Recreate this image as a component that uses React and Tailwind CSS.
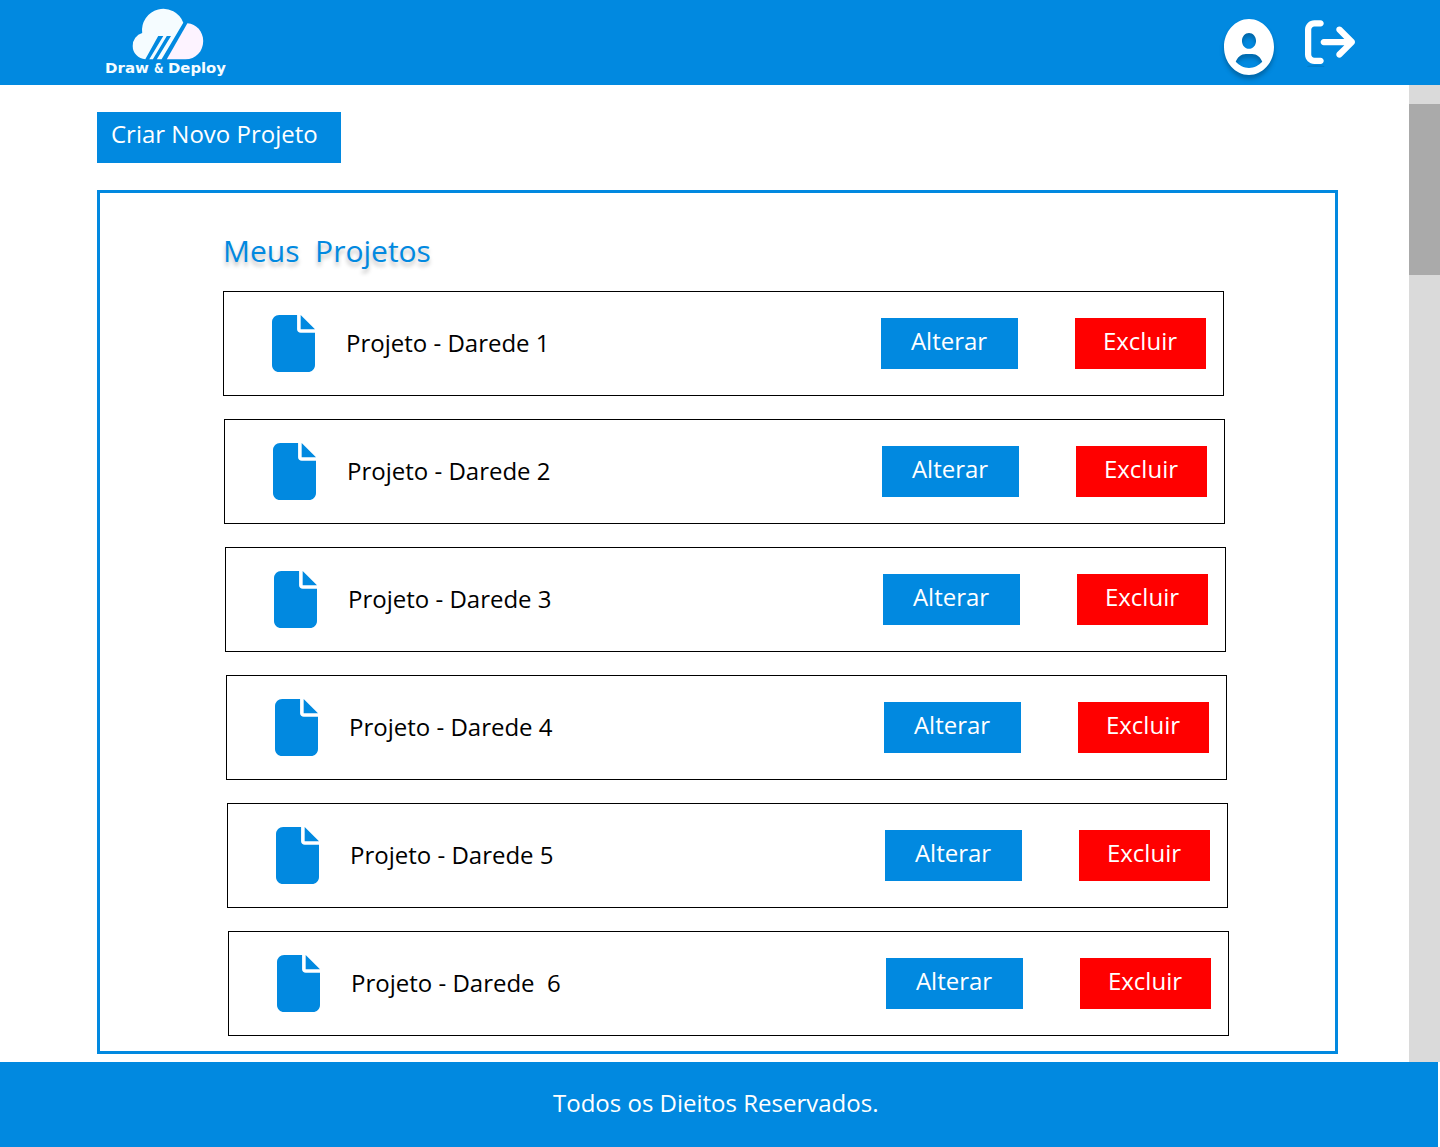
const projects = [
  { name: "Projeto - Darede 1", offset: "ml-0" },
  { name: "Projeto - Darede 2", offset: "ml-[1px]" },
  { name: "Projeto - Darede 3", offset: "ml-[2px]" },
  { name: "Projeto - Darede 4", offset: "ml-[3px]" },
  { name: "Projeto - Darede 5", offset: "ml-[4px]" },
  { name: "Projeto - Darede  6", offset: "ml-[5px]" },
];

function Logo() {
  return (
    <svg width="130" height="80" viewBox="0 0 130 80" className="block" aria-label="Draw & Deploy">
      <path
        fill="#f5fcff"
        d="M45.3 59.3A13.4 13.4 0 0 1 32.7 45.9A13.4 13.4 0 0 1 42.2 33A21.3 21.3 0 0 1 83.3 22.8L61.6 59.3H56.8L71 36H66.8L52.9 59.3H49.3L63.3 36H58.2L45.3 59.3Z"
      />
      <path fill="#fdf3ff" d="M66.8 59.3L87.4 23.2C96.5 23.8 103.2 31.6 103.2 41C103.2 51.5 95.5 59.3 85.5 59.3Z" />
      <g fill="#f5fcff" fontSize="14" fontWeight="700" fontFamily="'DejaVu Sans', sans-serif">
        <text x="5" y="72.8" textLength="44" lengthAdjust="spacingAndGlyphs">
          Draw
        </text>
        <text x="54" y="72.8" textLength="9.5" lengthAdjust="spacingAndGlyphs">
          &amp;
        </text>
        <text x="68" y="72.8" textLength="58" lengthAdjust="spacingAndGlyphs">
          Deploy
        </text>
      </g>
    </svg>
  );
}

function UserIcon() {
  return (
    <svg
      width="50"
      height="56"
      viewBox="0 0 512 512"
      preserveAspectRatio="none"
      className="block fill-white drop-shadow-[0_4px_2px_rgba(0,0,0,0.25)]"
    >
      <path d="M256 0C114.6 0 0 114.6 0 256s114.6 256 256 256s256-114.6 256-256S397.4 0 256 0zM256 128c39.77 0 72 32.24 72 72S295.8 272 256 272c-39.76 0-72-32.24-72-72S216.2 128 256 128zM256 448c-52.93 0-100.9-21.53-135.7-56.29C136.5 349.9 176.5 320 224 320h64c47.54 0 87.54 29.88 103.7 71.71C356.9 426.5 308.9 448 256 448z" />
    </svg>
  );
}

function LogoutIcon() {
  return (
    <svg width="50" height="50" viewBox="0 0 512 512" className="block fill-white">
      <ellipse cx="110" cy="506" rx="90" ry="14" className="fill-black/10" />
      <path d="M160 416H96c-17.67 0-32-14.33-32-32V128c0-17.67 14.33-32 32-32h64c17.67 0 32-14.33 32-32S177.7 32 160 32H96C42.98 32 0 74.98 0 128v256c0 53.02 42.98 96 96 96h64c17.67 0 32-14.33 32-32S177.7 416 160 416zM502.6 233.4l-128-128c-12.51-12.51-32.76-12.49-45.25 0c-12.5 12.5-12.5 32.75 0 45.25L402.8 224H192C174.3 224 160 238.3 160 256s14.31 32 32 32h210.8l-73.38 73.38c-12.5 12.5-12.5 32.75 0 45.25s32.75 12.5 45.25 0l128-128C515.1 266.1 515.1 245.9 502.6 233.4z" />
    </svg>
  );
}

function FileIcon() {
  return (
    <svg width="43" height="57" viewBox="0 0 384 512" preserveAspectRatio="none" className="block fill-[#0189e0]">
      <path d="M256 0v128h128L256 0zM224 128L224 0H64C28.65 0 0 28.65 0 64v384c0 35.35 28.65 64 64 64h256c35.35 0 64-28.65 64-64V160h-127.1C238.3 160 224 145.7 224 128z" />
    </svg>
  );
}

function ProjectRow({ name, offset }) {
  return (
    <li className={`flex h-[105px] w-[1001px] items-start border border-black ${offset}`}>
      <div className="mt-[23px] ml-12">
        <FileIcon />
      </div>
      <span className="mt-[34px] ml-[31px] flex-1 whitespace-pre text-black">{name}</span>
      <button className="mt-[26px] flex h-[51px] w-[137px] justify-center bg-[#0189e0] pt-[6px] pr-px text-white">
        Alterar
      </button>
      <button className="mt-[26px] mr-[17px] ml-[57px] flex h-[51px] w-[131px] justify-center bg-[#ff0000] pt-[6px] pr-px text-white">
        Excluir
      </button>
    </li>
  );
}

export default function App() {
  return (
    <div className="flex h-[1147px] w-[1440px] flex-col overflow-hidden bg-white font-['Open_Sans','Noto_Sans',sans-serif] text-[24px] leading-[33px]">
      <header className="flex h-[85px] shrink-0 items-start bg-[#0189e0] pr-[85px] pl-[100px]">
        <Logo />
        <div className="mt-[19px] ml-auto">
          <UserIcon />
        </div>
        <div className="mt-[17px] ml-[31px]">
          <LogoutIcon />
        </div>
      </header>

      <div className="flex h-[977px] shrink-0">
        <main className="flex-1 pt-[27px] pl-[97px]">
          <button className="flex h-[51px] w-[244px] bg-[#0189e0] pt-[5px] pl-[14px] text-white">Criar Novo Projeto</button>
          <section className="mt-[27px] h-[864px] w-[1241px] border-3 border-[#0189e0] pt-[37px] pl-[123px]">
            <h1 className="h-[61px] text-[30px] leading-[41px] whitespace-pre text-[#0189e0] [text-shadow:0_4px_4px_rgba(0,0,0,0.25)]">
              Meus  Projetos
            </h1>
            <ul className="flex flex-col gap-[23px]">
              {projects.map((project) => (
                <ProjectRow key={project.name} {...project} />
              ))}
            </ul>
          </section>
        </main>
        <div className="w-[31px] bg-[#dadada] pt-[19px]">
          <div className="h-[171px] bg-[#aaaaaa]" />
        </div>
      </div>

      <footer className="h-[85px] w-[1438px] shrink-0 bg-[#0189e0] pt-[24px] pl-[553px] text-white">
        Todos os Dieitos Reservados.
      </footer>
    </div>
  );
}
